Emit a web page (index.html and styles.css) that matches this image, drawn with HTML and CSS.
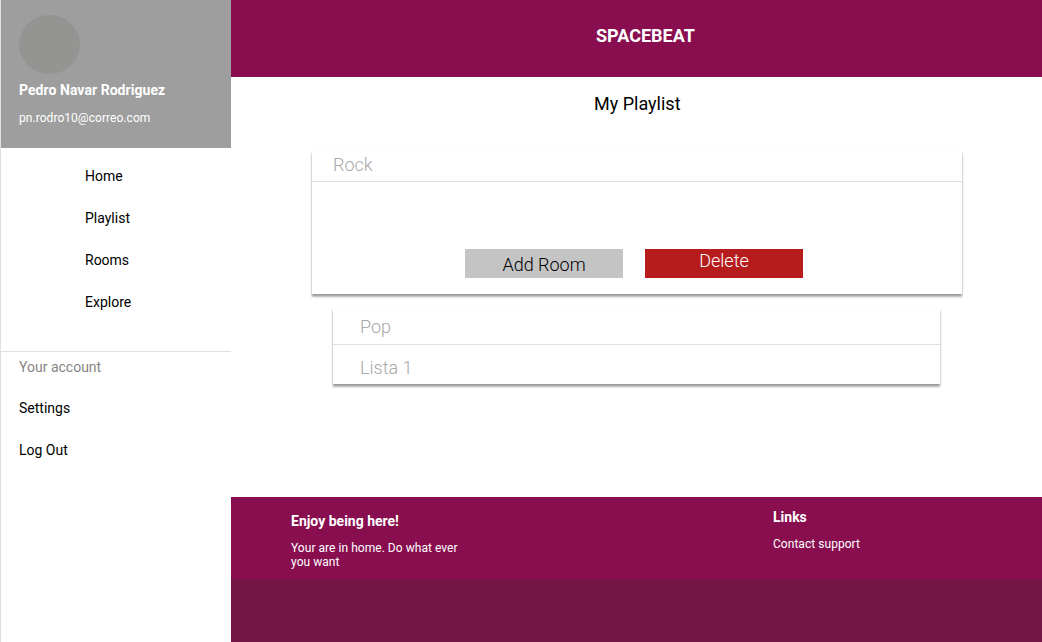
FILE: index.html
```html
<!DOCTYPE html>
<html lang="en">
<head>
    <meta charset="UTF-8">
    <title>Spacebeat</title>
    <link rel="stylesheet" href="styles.css">
</head>
<body>
<div class="sidebar">
    <div class="profile">
        <div class="avatar"></div>
        <div class="profile-name">Pedro Navar Rodriguez</div>
        <div class="profile-mail">pn.rodro10@correo.com</div>
    </div>
    <ul class="nav">
        <li>Home</li>
        <li>Playlist</li>
        <li>Rooms</li>
        <li>Explore</li>
    </ul>
    <div class="account">
        <div class="account-title">Your account</div>
        <ul class="account-links">
            <li>Settings</li>
            <li>Log Out</li>
        </ul>
    </div>
</div>
<div class="main">
    <div class="topbar">SPACEBEAT</div>
    <div class="content">
        <h1 class="page-title">My Playlist</h1>
        <div class="card card-open">
            <div class="card-row row-rock">Rock</div>
            <div class="card-actions">
                <button class="btn btn-add">Add Room</button>
                <button class="btn btn-delete">Delete</button>
            </div>
        </div>
        <div class="card card-list">
            <div class="card-row row-pop">Pop</div>
            <div class="card-row row-lista">Lista 1</div>
        </div>
    </div>
    <div class="footer">
        <div class="footer-left">
            <div class="footer-title">Enjoy being here!</div>
            <p class="footer-text">Your are in home. Do what ever you want</p>
        </div>
        <div class="footer-right">
            <div class="footer-links">Links</div>
            <div class="footer-text">Contact support</div>
        </div>
    </div>
    <div class="bottombar"></div>
</div>
</body>
</html>
```

FILE: styles.css
```css
*{
    margin: 0;
    padding: 0;
    box-sizing: border-box;
}
ul{
    list-style: none;
}
html, body{
    height: 100%;
}
body{
    display: flex;
    overflow: hidden;
    background: #ffffff;
    font-family: Roboto, "Liberation Sans", sans-serif;
    color: #000000;
}
.sidebar{
    width: 231px;
    flex-shrink: 0;
    border-left: 1px solid #e0e0e0;
}
.profile{
    height: 148px;
    background: #9e9e9e;
    padding: 15px 18px 0;
    color: #ffffff;
}
.avatar{
    width: 61px;
    height: 59px;
    border-radius: 50%;
    background: #949492;
}
.profile-name{
    margin-top: 7px;
    font-size: 14px;
    font-weight: 700;
    line-height: 18px;
    letter-spacing: 0.05px;
}
.profile-mail{
    margin-top: 10px;
    font-size: 12px;
    line-height: 18px;
    letter-spacing: 0.05px;
}
.nav{
    height: 204px;
    padding: 7px 0 0 84px;
    border-bottom: 1px solid #e0e0e0;
}
.nav li{
    height: 42px;
    font-size: 14px;
    line-height: 42px;
}
.account{
    padding-left: 18px;
    font-size: 14px;
}
.account-title{
    height: 35px;
    color: #858585;
    line-height: 30px;
}
.account-links li{
    height: 42px;
    line-height: 42px;
}
.main{
    flex: 1;
    display: flex;
    flex-direction: column;
}
.topbar{
    height: 77px;
    flex-shrink: 0;
    padding-left: 365px;
    background: #880e4f;
    color: #ffffff;
    font-size: 18px;
    font-weight: 700;
    line-height: 71px;
}
.content{
    height: 420px;
    flex-shrink: 0;
}
.page-title{
    height: 74px;
    padding-left: 363px;
    font-size: 18px;
    font-weight: 400;
    line-height: 54px;
}
.card{
    background: #ffffff;
    box-shadow: 0 3px 2px rgba(0, 0, 0, 0.3), 0 1px 2px rgba(0, 0, 0, 0.2);
}
.card-open{
    width: 650px;
    height: 143px;
    margin-left: 81px;
}
.card-list{
    width: 607px;
    height: 76px;
    margin: 14px 0 0 102px;
}
.card-row{
    border-bottom: 1px solid #e0e0e0;
    color: #a8a8a8;
    font-size: 18px;
    font-weight: 300;
}
.card-list .card-row:last-child{
    border-bottom: 0;
}
.row-rock{
    height: 31px;
    padding-left: 21px;
    line-height: 28px;
}
.row-pop{
    height: 37px;
    padding-left: 27px;
    line-height: 38px;
}
.row-lista{
    height: 39px;
    padding-left: 27px;
    line-height: 45px;
}
.card-actions{
    display: flex;
    gap: 22px;
    padding: 67px 0 0 153px;
}
.btn{
    width: 158px;
    height: 29px;
    border: 0;
    font-family: inherit;
    font-size: 18px;
    font-weight: 300;
}
.btn-add{
    background: #c4c4c4;
    color: #000000;
    line-height: 32px;
}
.btn-delete{
    background: #b71c1c;
    color: #ffffff;
    padding-bottom: 6px;
}
.footer{
    height: 82px;
    flex-shrink: 0;
    display: flex;
    background: #880e4f;
    color: #ffffff;
}
.footer-left{
    width: 542px;
    padding: 15px 0 0 60px;
}
.footer-title{
    font-size: 14px;
    font-weight: 700;
    line-height: 18px;
}
.footer-left .footer-text{
    width: 180px;
    margin-top: 11px;
}
.footer-text{
    font-size: 12px;
    line-height: 14px;
    letter-spacing: 0.04px;
}
.footer-right{
    padding-top: 11px;
}
.footer-links{
    margin-bottom: 11px;
    font-size: 14px;
    font-weight: 700;
    line-height: 18px;
}
.bottombar{
    flex: 1;
    background: #741445;
}
```
